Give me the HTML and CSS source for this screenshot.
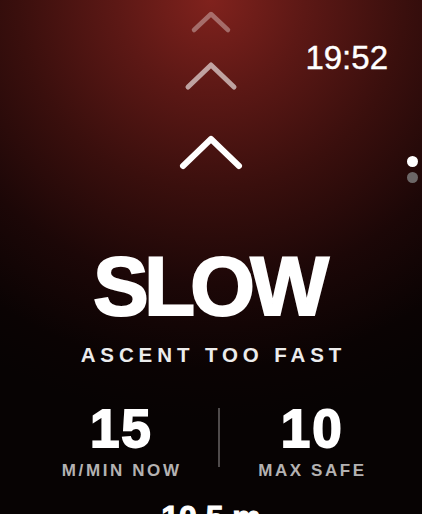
FILE: index.html
```html
<!DOCTYPE html>
<html>
<head>
<meta charset="utf-8">
<link rel="stylesheet" href="styles.css">
</head>
<body>
<div class="screen">
  <div class="time">19:52</div>
  <div class="pager"><span class="dot on"></span><span class="dot"></span></div>
  <svg class="chevrons" viewBox="176 0 70 180" width="70" height="180">
    <polyline points="194,30 211,14 228,30" fill="none" stroke="#fff" stroke-opacity="0.35" stroke-width="4.5" stroke-linecap="round" stroke-linejoin="round"/>
    <polyline points="188,87 211,65 234,87" fill="none" stroke="#fff" stroke-opacity="0.6" stroke-width="5" stroke-linecap="round" stroke-linejoin="round"/>
    <polyline points="183,166 211,139 239,166" fill="none" stroke="#fff" stroke-width="6" stroke-linecap="round" stroke-linejoin="round"/>
  </svg>
  <div class="status">SLOW</div>
  <div class="reason">ASCENT TOO FAST</div>
  <div class="stats">
    <div class="stat">
      <div class="num">15</div>
      <div class="label">M/MIN NOW</div>
    </div>
    <div class="divider"></div>
    <div class="stat">
      <div class="num">10</div>
      <div class="label">MAX SAFE</div>
    </div>
  </div>
  <div class="depth">10.5 m</div>
</div>
</body>
</html>
```
FILE: styles.css
```css
html, body {
  margin: 0;
  padding: 0;
  background: #070303;
}
.screen {
  position: relative;
  width: 422px;
  height: 514px;
  overflow: hidden;
  display: flex;
  flex-direction: column;
  align-items: center;
  color: #fff;
  font-family: "Liberation Sans", Arial, sans-serif;
  background: radial-gradient(ellipse 430px 420px at 50% 0, #80221d 0%, #5c1815 22%, #3a0f0d 45%, #1c0707 68%, #0a0303 88%, #070303 100%);
}
.time {
  position: absolute;
  top: 41px;
  right: 34px;
  font-size: 33px;
  line-height: 33px;
  font-weight: 400;
  -webkit-text-stroke: 0.4px #fff;
  color: #fff;
}
.pager {
  position: absolute;
  top: 156px;
  right: 4px;
  display: flex;
  flex-direction: column;
  gap: 5px;
}
.dot {
  width: 11px;
  height: 11px;
  border-radius: 50%;
  background: #6c6767;
}
.dot.on {
  background: #fff;
}
.chevrons {
  display: block;
  flex: none;
}
.status {
  margin-top: 65px;
  font-size: 83px;
  line-height: 84px;
  font-weight: 700;
  letter-spacing: -4.5px;
  text-indent: -4.5px;
  -webkit-text-stroke: 2.2px #fff;
}
.reason {
  margin-top: 16px;
  font-size: 20.5px;
  line-height: 20px;
  font-weight: 700;
  letter-spacing: 4.9px;
  padding-left: 4.9px;
  color: #ececec;
}
.stats {
  margin-top: 38px;
  padding-left: 4px;
  display: flex;
  justify-content: center;
  gap: 36px;
}
.stat {
  display: flex;
  flex-direction: column;
  align-items: center;
}
.num {
  font-size: 53px;
  line-height: 52px;
  font-weight: 700;
  letter-spacing: 2px;
  padding-left: 2px;
  -webkit-text-stroke: 1.8px #fff;
}
.label {
  margin-top: 7px;
  font-size: 17px;
  line-height: 18px;
  font-weight: 700;
  letter-spacing: 2.6px;
  padding-left: 2.6px;
  color: #b4b2b2;
}
.divider {
  width: 2px;
  height: 59px;
  margin-top: 5px;
  background: #4f4b4b;
}
.depth {
  margin-top: 21px;
  font-size: 32px;
  line-height: 32px;
  font-weight: 700;
  -webkit-text-stroke: 1px #fff;
  color: #fff;
}
```
